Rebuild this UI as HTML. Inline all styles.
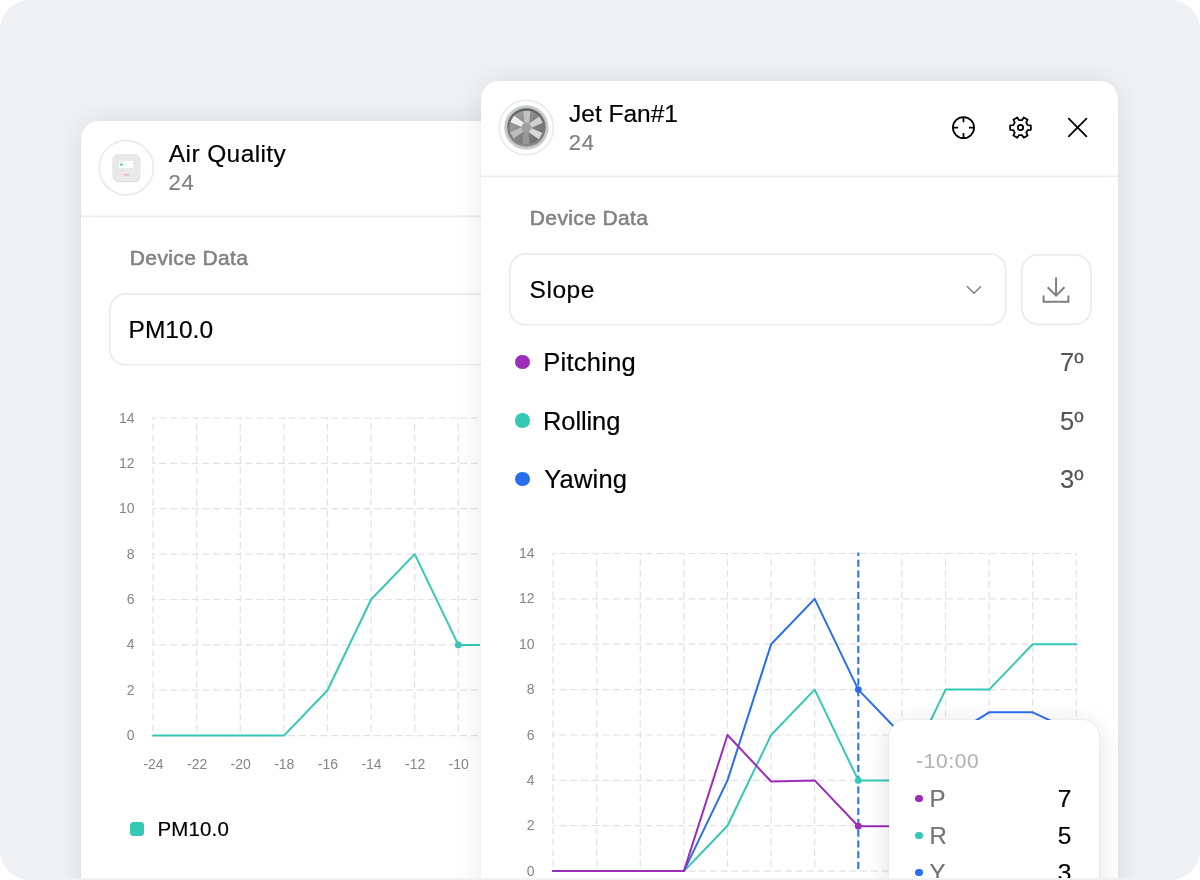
<!DOCTYPE html>
<html lang="en">
<head>
<meta charset="utf-8">
<title>Device Data</title>
<style>
*{box-sizing:border-box;margin:0;padding:0}
html,body{width:1200px;height:880px;background:#fff;overflow:hidden}
body{font-family:"Liberation Sans",sans-serif;color:#000;position:relative}
.stage{will-change:transform;position:absolute;left:0;top:0;width:1200px;height:880px;background:#f0f1f5;border-radius:30px;overflow:hidden}
.clip{position:absolute;left:0;top:0;width:1200px;height:878px;overflow:hidden}
.card{position:absolute;width:637px;height:840px;background:#fff;border-radius:18px;box-shadow:0 0 30px rgba(10,10,20,.085),0 0 2px rgba(10,10,20,.05)}
.card.left{left:81px;top:121px}
.card.right{left:481px;top:81px}
.t,.row b,.row em,.r b,.r em{position:absolute;white-space:nowrap;font-weight:400;font-style:normal;-webkit-text-stroke:.18px currentColor}
.head{position:absolute;left:0;top:0;width:100%;height:96px}
.head svg.div{position:absolute;left:0;top:93px}
.avatar{position:absolute;left:17px;top:18px;width:58px;height:58px}
svg.box{position:absolute;overflow:visible}
.select svg.chev{position:absolute}
.dl svg.ico{position:absolute}
.row i{position:absolute;width:14.5px;height:14.5px;border-radius:50%}
svg.chart{position:absolute;left:0;top:0;overflow:visible}
.axt text{font-family:"Liberation Sans",sans-serif;font-size:14px;letter-spacing:0;fill:#858585}
.legend i{position:absolute;left:48.80000000000001px;top:700.6px;width:14.2px;height:14.2px;border-radius:3.5px;background:#35c9b5}
.tip{position:absolute;left:889px;top:720px;width:210px;height:200px;border-radius:17px;background:#fff;box-shadow:0 4px 24px rgba(20,24,40,.13),0 0 2.5px rgba(20,24,40,.1)}
.tip .r i{position:absolute;width:7.5px;height:7.5px;border-radius:50%}
</style>
</head>
<body>
<div class="stage"><div class="clip">

<div class="card left">
  <div class="head">
    <svg class="avatar" viewBox="0 0 58 58">
      <circle cx="28.3" cy="28.7" r="27.2" fill="#fff" stroke="#e9e9e9" stroke-width="1.6"/>
      <rect x="14.3" y="15" width="28.200" height="27.7" rx="5.6" fill="#e9e9e9"/>
      <path d="M15.5 39.500q1.800 3.200 5 3.200h15.600q3.200 0 5-3.200" fill="none" stroke="#cfcfcf" stroke-width=".7"/>
      <rect x="21" y="21.900" width="14.2" height="7.100" rx=".5" fill="#fff"/>
      <rect x="22.2" y="24.5" width="2.400" height="2.200" fill="#45cf8f"/>
      <rect x="26.200" y="25" width="1.600" height="1.300" fill="#c4ead6"/>
      <rect x="22.200" y="22.700" width="2.200" height=".7" fill="#c9c9c9"/>
      <rect x="25.700" y="35.400" width="5.400" height=".9" fill="#f09a9a"/>
    </svg>
    <svg class="div" width="637" height="5" viewBox="0 0 637 5"><line x1="0" y1="2.3" x2="637" y2="2.3" stroke="#ededed" stroke-width="1.7"/></svg><div class="t" style="top:17.80px;font-size:24.5px;line-height:29px;color:#000;left:87.80px;letter-spacing:0.4px;">Air Quality</div><div class="t" style="top:48.80px;font-size:22px;line-height:26px;color:#808080;left:87.60px;letter-spacing:0.7px;">24</div>
  </div>
  <div class="t" style="top:124.30px;font-size:21px;line-height:25px;color:#828282;left:48.80px;letter-spacing:0.38px;-webkit-text-stroke:.55px #828282;">Device Data</div>
  <div class="select"><svg class="box" style="left:27.60px;top:172.00px" width="560.00" height="72.60" viewBox="0 0 560.00 72.60"><rect x="0.85" y="0.85" width="558.30" height="70.90" rx="16" fill="#fff" stroke="#ebebeb" stroke-width="1.7"/></svg><div class="t" style="top:194.30px;font-size:24.5px;line-height:29px;color:#000;left:47.60px;">PM10.0</div></div>
  <div class="legend"><i></i><div class="t" style="top:694.90px;font-size:20.5px;line-height:25px;color:#000;left:76.40px;letter-spacing:0.15px;">PM10.0</div></div>
</div>
<svg class="chart" style="overflow:hidden" width="479.5" height="880" viewBox="0 0 479.5 880">
<g stroke="#e2e2e2" stroke-width="1.2" stroke-dasharray="7 3.74" fill="none"><line x1="152.4" y1="735.6" x2="676.9" y2="735.6" stroke-dashoffset="3.7"/><line x1="152.4" y1="690.2" x2="676.9" y2="690.2" stroke-dashoffset="3.7"/><line x1="152.4" y1="644.9" x2="676.9" y2="644.9" stroke-dashoffset="3.7"/><line x1="152.4" y1="599.5" x2="676.9" y2="599.5" stroke-dashoffset="3.7"/><line x1="152.4" y1="554.1" x2="676.9" y2="554.1" stroke-dashoffset="3.7"/><line x1="152.4" y1="508.7" x2="676.9" y2="508.7" stroke-dashoffset="3.7"/><line x1="152.4" y1="463.4" x2="676.9" y2="463.4" stroke-dashoffset="3.7"/><line x1="152.4" y1="418.0" x2="676.9" y2="418.0" stroke-dashoffset="3.7"/><line x1="153.1" y1="417.4" x2="153.1" y2="735.6" stroke-dashoffset="4.4"/><line x1="196.7" y1="417.4" x2="196.7" y2="735.6" stroke-dashoffset="4.4"/><line x1="240.3" y1="417.4" x2="240.3" y2="735.6" stroke-dashoffset="4.4"/><line x1="283.9" y1="417.4" x2="283.9" y2="735.6" stroke-dashoffset="4.4"/><line x1="327.5" y1="417.4" x2="327.5" y2="735.6" stroke-dashoffset="4.4"/><line x1="371.1" y1="417.4" x2="371.1" y2="735.6" stroke-dashoffset="4.4"/><line x1="414.7" y1="417.4" x2="414.7" y2="735.6" stroke-dashoffset="4.4"/><line x1="458.3" y1="417.4" x2="458.3" y2="735.6" stroke-dashoffset="4.4"/><line x1="501.9" y1="417.4" x2="501.9" y2="735.6" stroke-dashoffset="4.4"/><line x1="545.5" y1="417.4" x2="545.5" y2="735.6" stroke-dashoffset="4.4"/><line x1="589.1" y1="417.4" x2="589.1" y2="735.6" stroke-dashoffset="4.4"/><line x1="632.7" y1="417.4" x2="632.7" y2="735.6" stroke-dashoffset="4.4"/><line x1="676.3" y1="417.4" x2="676.3" y2="735.6" stroke-dashoffset="4.4"/></g>
<g class="axt"><text x="134.5" y="740.1" text-anchor="end">0</text><text x="134.5" y="694.7" text-anchor="end">2</text><text x="134.5" y="649.4" text-anchor="end">4</text><text x="134.5" y="604.0" text-anchor="end">6</text><text x="134.5" y="558.6" text-anchor="end">8</text><text x="134.5" y="513.2" text-anchor="end">10</text><text x="134.5" y="467.9" text-anchor="end">12</text><text x="134.5" y="422.5" text-anchor="end">14</text></g>
<g class="axt"><text x="153.5" y="768.8" text-anchor="middle" letter-spacing="1">-24</text><text x="197.1" y="768.8" text-anchor="middle" letter-spacing="1">-22</text><text x="240.7" y="768.8" text-anchor="middle" letter-spacing="1">-20</text><text x="284.3" y="768.8" text-anchor="middle" letter-spacing="1">-18</text><text x="327.9" y="768.8" text-anchor="middle" letter-spacing="1">-16</text><text x="371.5" y="768.8" text-anchor="middle" letter-spacing="1">-14</text><text x="415.1" y="768.8" text-anchor="middle" letter-spacing="1">-12</text><text x="458.7" y="768.8" text-anchor="middle" letter-spacing="1">-10</text><text x="502.3" y="768.8" text-anchor="middle" letter-spacing="1">-8</text><text x="545.9" y="768.8" text-anchor="middle" letter-spacing="1">-6</text><text x="589.5" y="768.8" text-anchor="middle" letter-spacing="1">-4</text><text x="633.1" y="768.8" text-anchor="middle" letter-spacing="1">-2</text><text x="676.7" y="768.8" text-anchor="middle" letter-spacing="1">0</text></g>
<polyline points="153.1,735.6 196.7,735.6 240.3,735.6 283.9,735.6 327.5,690.2 371.1,599.5 414.7,554.1 458.3,644.9 501.9,644.9 545.5,599.5 589.1,599.5 632.7,622.2 676.3,622.2" fill="none" stroke="#35c9b5" stroke-width="2" stroke-linejoin="round" stroke-linecap="round"/>
<circle cx="458.3" cy="644.9" r="3.4" fill="#35c9b5"/>
</svg>

<div class="card right">
  <div class="head">
    <svg class="avatar" viewBox="0 0 58 58">
      <defs>
        <linearGradient id="fg" x1="0" y1="0" x2="1" y2="1"><stop offset="0" stop-color="#a9aaab"/><stop offset=".45" stop-color="#868889"/><stop offset="1" stop-color="#66686a"/></linearGradient>
        <linearGradient id="rg" x1="0" y1="0" x2="0" y2="1"><stop offset="0" stop-color="#5f6163"/><stop offset="1" stop-color="#8b8d8f"/></linearGradient>
      </defs>
      <circle cx="28.300" cy="28.500" r="27.2" fill="#fff" stroke="#e9e9e9" stroke-width="1.6"/>
      <g transform="translate(.4 .3)">
      <circle cx="28" cy="28.200" r="22.200" fill="#c7cacb"/>
      <circle cx="28" cy="28.200" r="19.300" fill="url(#rg)"/>
      <circle cx="28" cy="28.200" r="16.800" fill="url(#fg)"/>
      <path d="M24.800 11.600h7.200l-1.300 13h-4.600z" fill="#c4c2c0"/>
      <path d="M24.800 11.600h7.200l-1.300 13h-4.600z" transform="rotate(180 28 28.200)" fill="#9a9897"/>
      <path d="M24.800 11.600h7.200l-1.300 13h-4.600z" transform="rotate(60 28 28.200)" fill="#d2d0ce"/>
      <path d="M24.800 11.600h7.200l-1.300 13h-4.600z" transform="rotate(120 28 28.200)" fill="#dad8d6"/>
      <path d="M24.800 11.600h7.200l-1.300 13h-4.600z" transform="rotate(240 28 28.200)" fill="#bebcba"/>
      <path d="M24.800 11.600h7.200l-1.300 13h-4.600z" transform="rotate(300 28 28.200)" fill="#f0eeec"/>
      <circle cx="28" cy="28.200" r="4.900" fill="#a19f9e"/>
      </g>
    </svg>
    <svg class="div" width="637" height="5" viewBox="0 0 637 5"><line x1="0" y1="2.3" x2="637" y2="2.3" stroke="#ededed" stroke-width="1.7"/></svg><div class="t" style="top:17.80px;font-size:24.5px;line-height:29px;color:#000;left:88.00px;">Jet Fan#1</div><div class="t" style="top:48.80px;font-size:22px;line-height:26px;color:#808080;left:87.80px;letter-spacing:0.7px;">24</div>
    <svg class="acts" style="position:absolute;left:0;top:0;overflow:visible" width="637" height="95" viewBox="481 81 637 95" fill="none" stroke="#000" stroke-width="1.75">
      <circle cx="963.5" cy="127.6" r="10.6"/>
      <path d="M963.5 117v5.2M963.5 138.2v-5.2M952.9 127.6h5.200M974.1 127.6h-5.200"/>
      <path d="M1027.69 125.14 L1030.87 125.39 L1030.87 129.81 L1027.69 130.06 L1026.23 132.60 L1027.60 135.47 L1023.77 137.68 L1021.96 135.06 L1019.04 135.06 L1017.23 137.68 L1013.40 135.47 L1014.77 132.60 L1013.31 130.06 L1010.13 129.81 L1010.13 125.39 L1013.31 125.14 L1014.77 122.60 L1013.40 119.73 L1017.23 117.52 L1019.04 120.14 L1021.96 120.14 L1023.77 117.52 L1027.60 119.73 L1026.23 122.60Z" stroke-linejoin="round"/>
      <circle cx="1020.500" cy="127.600" r="2.7"/>
      <path d="M1068.3 118.200l18.600 18.600M1086.900 118.200L1068.300 136.800"/>
    </svg>
  </div>
  <div class="t" style="top:124.30px;font-size:21px;line-height:25px;color:#828282;left:48.80px;letter-spacing:0.38px;-webkit-text-stroke:.55px #828282;">Device Data</div>
  <div class="select"><svg class="box" style="left:27.60px;top:172.00px" width="497.60" height="72.60" viewBox="0 0 497.60 72.60"><rect x="0.85" y="0.85" width="495.90" height="70.90" rx="16" fill="#fff" stroke="#ebebeb" stroke-width="1.7"/></svg><div class="t" style="top:194.30px;font-size:24.5px;line-height:29px;color:#000;left:48.60px;letter-spacing:0.5px;">Slope</div>
    <svg class="chev" style="left:485.29999999999995px;top:203.60000000000002px" width="16" height="10" viewBox="0 0 16 10" fill="none" stroke="#7d7d7d" stroke-width="1.4"><path d="M1 1.2l7 7 7-7"/></svg>
  </div>
  <div class="dl"><svg class="box" style="left:539.75px;top:172.90px" width="70.75" height="71.20" viewBox="0 0 70.75 71.20"><rect x="0.85" y="0.85" width="69.05" height="69.50" rx="16" fill="#fff" stroke="#ebebeb" stroke-width="1.7"/></svg>
    <svg class="ico" style="left:560px;top:193.5px" width="30" height="30" viewBox="0 0 30 30" fill="none" stroke="#808080" stroke-width="2"><path d="M15.050 2.500v18M6.650 12.200l8.400 8.400 8.400-8.400M2.600 20.600v6.200h24.800v-6.200"/></svg>
  </div>
  <div class="row"><i style="left:34.4px;top:273.95px;background:#9b2db8"></i><b class="t" style="top:266.10px;font-size:25.5px;line-height:31px;color:#000;left:62.30px;letter-spacing:0.25px;">Pitching</b><em class="t" style="top:266.40px;font-size:25.5px;line-height:31px;color:#555;right:34.40px;">7º</em></div>
<div class="row"><i style="left:34.4px;top:332.25px;background:#35c9b5"></i><b class="t" style="top:324.50px;font-size:25.5px;line-height:31px;color:#000;left:62.00px;letter-spacing:-0.1px;">Rolling</b><em class="t" style="top:324.80px;font-size:25.5px;line-height:31px;color:#555;right:34.40px;">5º</em></div>
<div class="row"><i style="left:34.4px;top:390.75px;background:#2a6ef0"></i><b class="t" style="top:382.80px;font-size:25.5px;line-height:31px;color:#000;left:63.30px;letter-spacing:0.2px;">Yawing</b><em class="t" style="top:383.10px;font-size:25.5px;line-height:31px;color:#555;right:34.40px;">3º</em></div>

</div>
<svg class="chart" width="1200" height="880" viewBox="0 0 1200 880">
<g stroke="#e2e2e2" stroke-width="1.2" stroke-dasharray="7 3.74" fill="none"><line x1="552.4" y1="871.1" x2="1076.9" y2="871.1" stroke-dashoffset="3.7"/><line x1="552.4" y1="825.7" x2="1076.9" y2="825.7" stroke-dashoffset="3.7"/><line x1="552.4" y1="780.4" x2="1076.9" y2="780.4" stroke-dashoffset="3.7"/><line x1="552.4" y1="735.0" x2="1076.9" y2="735.0" stroke-dashoffset="3.7"/><line x1="552.4" y1="689.6" x2="1076.9" y2="689.6" stroke-dashoffset="3.7"/><line x1="552.4" y1="644.2" x2="1076.9" y2="644.2" stroke-dashoffset="3.7"/><line x1="552.4" y1="598.9" x2="1076.9" y2="598.9" stroke-dashoffset="3.7"/><line x1="552.4" y1="553.5" x2="1076.9" y2="553.5" stroke-dashoffset="3.7"/><line x1="553.1" y1="552.9" x2="553.1" y2="871.1" stroke-dashoffset="4.4"/><line x1="596.7" y1="552.9" x2="596.7" y2="871.1" stroke-dashoffset="4.4"/><line x1="640.3" y1="552.9" x2="640.3" y2="871.1" stroke-dashoffset="4.4"/><line x1="683.9" y1="552.9" x2="683.9" y2="871.1" stroke-dashoffset="4.4"/><line x1="727.5" y1="552.9" x2="727.5" y2="871.1" stroke-dashoffset="4.4"/><line x1="771.1" y1="552.9" x2="771.1" y2="871.1" stroke-dashoffset="4.4"/><line x1="814.7" y1="552.9" x2="814.7" y2="871.1" stroke-dashoffset="4.4"/><line x1="858.3" y1="552.9" x2="858.3" y2="871.1" stroke-dashoffset="4.4"/><line x1="901.9" y1="552.9" x2="901.9" y2="871.1" stroke-dashoffset="4.4"/><line x1="945.5" y1="552.9" x2="945.5" y2="871.1" stroke-dashoffset="4.4"/><line x1="989.1" y1="552.9" x2="989.1" y2="871.1" stroke-dashoffset="4.4"/><line x1="1032.7" y1="552.9" x2="1032.7" y2="871.1" stroke-dashoffset="4.4"/><line x1="1076.3" y1="552.9" x2="1076.3" y2="871.1" stroke-dashoffset="4.4"/></g>
<g class="axt"><text x="534.5" y="875.6" text-anchor="end">0</text><text x="534.5" y="830.2" text-anchor="end">2</text><text x="534.5" y="784.9" text-anchor="end">4</text><text x="534.5" y="739.5" text-anchor="end">6</text><text x="534.5" y="694.1" text-anchor="end">8</text><text x="534.5" y="648.7" text-anchor="end">10</text><text x="534.5" y="603.4" text-anchor="end">12</text><text x="534.5" y="558.0" text-anchor="end">14</text></g>
<g class="axt"><text x="553.5" y="904.3" text-anchor="middle" letter-spacing="1">-24</text><text x="597.1" y="904.3" text-anchor="middle" letter-spacing="1">-22</text><text x="640.7" y="904.3" text-anchor="middle" letter-spacing="1">-20</text><text x="684.3" y="904.3" text-anchor="middle" letter-spacing="1">-18</text><text x="727.9" y="904.3" text-anchor="middle" letter-spacing="1">-16</text><text x="771.5" y="904.3" text-anchor="middle" letter-spacing="1">-14</text><text x="815.1" y="904.3" text-anchor="middle" letter-spacing="1">-12</text><text x="858.7" y="904.3" text-anchor="middle" letter-spacing="1">-10</text><text x="902.3" y="904.3" text-anchor="middle" letter-spacing="1">-8</text><text x="945.9" y="904.3" text-anchor="middle" letter-spacing="1">-6</text><text x="989.5" y="904.3" text-anchor="middle" letter-spacing="1">-4</text><text x="1033.1" y="904.3" text-anchor="middle" letter-spacing="1">-2</text><text x="1076.7" y="904.3" text-anchor="middle" letter-spacing="1">0</text></g>
<line x1="858.3" y1="552.4" x2="858.3" y2="872.1" stroke="#2a6ef0" stroke-width="2" stroke-dasharray="7 3.8" stroke-dashoffset="3.5"/>
<polyline points="553.1,871.1 596.7,871.1 640.3,871.1 683.9,871.1 727.5,825.7 771.1,735.0 814.7,689.6 858.3,780.4 901.9,780.4 945.5,689.6 989.1,689.6 1032.7,644.2 1076.3,644.2" fill="none" stroke="#35c9b5" stroke-width="2" stroke-linejoin="round" stroke-linecap="round"/>
<polyline points="553.1,871.1 596.7,871.1 640.3,871.1 683.9,871.1 727.5,780.4 771.1,644.2 814.7,598.9 858.3,689.6 901.9,735.0 945.5,739.5 989.1,712.3 1032.7,712.3 1076.3,732.7" fill="none" stroke="#2a6ef0" stroke-width="2" stroke-linejoin="round" stroke-linecap="round"/>
<polyline points="553.1,871.1 596.7,871.1 640.3,871.1 683.9,871.1 727.5,735.0 771.1,781.5 814.7,780.4 858.3,826.2 901.9,826.2 945.5,825.7 989.1,803.0 1032.7,803.0 1076.3,803.0" fill="none" stroke="#9b2db8" stroke-width="2" stroke-linejoin="round" stroke-linecap="round"/>
<circle cx="858.3" cy="780.4" r="3.4" fill="#35c9b5"/>
<circle cx="858.3" cy="689.6" r="3.4" fill="#2a6ef0"/>
<circle cx="858.3" cy="826.2" r="3.4" fill="#9b2db8"/>
</svg>

<div class="tip">
  <div class="t" style="top:28.30px;font-size:21px;line-height:25px;color:#b5b5b5;left:27.00px;letter-spacing:0.65px;">-10:00</div>
  <div class="r"><i style="left:26.25px;top:74.95px;background:#9b2db8"></i><b class="t" style="top:64.20px;font-size:24px;line-height:29px;color:#747474;left:40.40px;">P</b><em class="t" style="top:64.20px;font-size:24.5px;line-height:29px;color:#000;right:27.60px;">7</em></div>
<div class="r"><i style="left:26.25px;top:111.95px;background:#35c9b5"></i><b class="t" style="top:101.20px;font-size:24px;line-height:29px;color:#747474;left:40.40px;">R</b><em class="t" style="top:101.20px;font-size:24.5px;line-height:29px;color:#000;right:27.60px;">5</em></div>
<div class="r"><i style="left:26.25px;top:148.95px;background:#2a6ef0"></i><b class="t" style="top:138.20px;font-size:24px;line-height:29px;color:#747474;left:40.40px;">Y</b><em class="t" style="top:138.20px;font-size:24.5px;line-height:29px;color:#000;right:27.60px;">3</em></div>

</div>

</div></div>
</body>
</html>
